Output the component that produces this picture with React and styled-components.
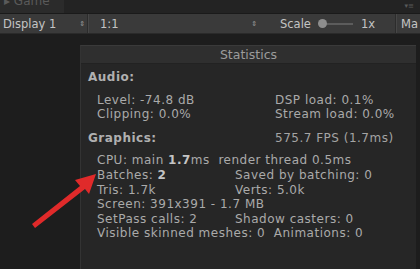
import React from "react";
import styled, { createGlobalStyle } from "styled-components";

const Global = createGlobalStyle`
  html, body {
    margin: 0;
    padding: 0;
    background: #1c1c1c;
  }
  body {
    font-family: "DejaVu Sans", "Liberation Sans", sans-serif;
  }
`;

const Screen = styled.div`
  position: relative;
  width: 420px;
  height: 269px;
  overflow: hidden;
  background: #1c1c1c;
  display: flex;
  flex-direction: column;
`;

const TabStrip = styled.div`
  height: 13px;
  display: flex;
  background: #232323;
  border-bottom: 1px solid #1a1a1a;
`;

const Tab = styled.div`
  width: 60px;
  background: #2b2b2b;
  color: #5a5a5a;
  font-size: 12px;
  line-height: 12px;
  padding-left: 4px;
  overflow: hidden;
  span {
    display: block;
    margin-top: -5px;
  }
`;

const TabMenu = styled.div`
  margin-left: auto;
  padding-right: 6px;
  color: #5a5a5a;
  font-size: 7px;
  line-height: 12px;
`;

const Toolbar = styled.div`
  height: 19px;
  display: flex;
  align-items: center;
  background: #3a3a3a;
  border-bottom: 1px solid #2a2a2a;
  color: #c4c4c4;
  font-size: 11.5px;
  overflow: hidden;
`;

const ToolItem = styled.div`
  flex-shrink: 0;
  display: flex;
  align-items: center;
  height: 100%;
  width: ${(p) => p.$w || "auto"};
  padding: 0 ${(p) => p.$pad || "3px"};
  box-sizing: border-box;
  border-right: ${(p) => (p.$sep ? "1px solid #2c2c2c" : "none")};
  box-shadow: ${(p) => (p.$sep ? "1px 0 0 #474747" : "none")};
`;

const Updown = styled.span`
  margin-left: auto;
  font-size: 7px;
  color: #9a9a9a;
  letter-spacing: -1px;
`;

const Slider = styled.div`
  position: relative;
  width: 34px;
  height: 9px;
  margin: 0 8px 0 8px;
  display: flex;
  align-items: center;
  &::before {
    content: "";
    flex: 1;
    height: 2px;
    background: #5c5c5c;
  }
`;

const Knob = styled.div`
  position: absolute;
  left: -1px;
  width: 9px;
  height: 9px;
  border-radius: 50%;
  background: #8d8d8d;
`;

const Viewport = styled.div`
  flex: 1;
  padding: 11px 4px 0 80px;
  background: #1d1d1d;
`;

const Panel = styled.div`
  height: 100%;
  background: #262626;
  border-left: 1px solid #333;
  border-top: 1px solid #3a3a3a;
  display: flex;
  flex-direction: column;
`;

const PanelHead = styled.div`
  height: 17px;
  background: #2f2f2f;
  border-bottom: 1px solid #222;
  color: #9c9c9c;
  font-size: 12.5px;
  line-height: 17px;
  text-align: center;
`;

const PanelBody = styled.div`
  padding: 6px 0 0 7px;
  color: #aaaaaa;
  font-size: 12px;
  letter-spacing: 0.5px;
  line-height: 14.6px;
`;

const Heading = styled.div`
  font-weight: bold;
  color: #b0b0b0;
  display: grid;
  grid-template-columns: 187px auto;
  margin: ${(p) => p.$m || "0"};
  span {
    font-weight: normal;
    color: #a4a4a4;
  }
`;

const Rows = styled.div`
  padding-left: 9px;
  margin: ${(p) => p.$m || "0"};
`;

const Row = styled.div`
  display: grid;
  grid-template-columns: ${(p) => p.$col || "178px"} auto;
  white-space: pre;
  b {
    color: #c4c4c4;
  }
`;

const Arrow = styled.svg`
  position: absolute;
  left: 0;
  top: 0;
  pointer-events: none;
`;

export default function App() {
  return (
    <>
      <Global />
      <Screen>
        <TabStrip>
          <Tab>
            <span>▸ Game</span>
          </Tab>
          <TabMenu>▾≡</TabMenu>
        </TabStrip>
        <Toolbar>
          <ToolItem $w="88px" $sep>
            Display 1<Updown>⇕</Updown>
          </ToolItem>
          <ToolItem $w="180px" $pad="12px">
            1:1<Updown>⇕</Updown>
          </ToolItem>
          <ToolItem $w="128px" $pad="12px" $sep>
            Scale
            <Slider>
              <Knob />
            </Slider>
            1x
          </ToolItem>
          <ToolItem $pad="5px">Ma</ToolItem>
        </Toolbar>
        <Viewport>
          <Panel>
            <PanelHead>Statistics</PanelHead>
            <PanelBody>
              <Heading>Audio:</Heading>
              <Rows $m="8px 0 9px">
                <Row>
                  <span>Level: -74.8 dB</span>
                  <span>DSP load: 0.1%</span>
                </Row>
                <Row>
                  <span>Clipping: 0.0%</span>
                  <span>Stream load: 0.0%</span>
                </Row>
              </Rows>
              <Heading>
                Graphics:<span>575.7 FPS (1.7ms)</span>
              </Heading>
              <Rows $m="8px 0 0">
                <Row $col="auto">
                  <span>
                    CPU: main <b>1.7</b>ms  render thread 0.5ms
                  </span>
                </Row>
                <Row $col="138px">
                  <span>
                    Batches: <b>2</b>
                  </span>
                  <span>Saved by batching: 0</span>
                </Row>
                <Row $col="138px">
                  <span>Tris: 1.7k</span>
                  <span>Verts: 5.0k</span>
                </Row>
                <Row $col="auto">
                  <span>Screen: 391x391 - 1.7 MB</span>
                </Row>
                <Row $col="138px">
                  <span>SetPass calls: 2</span>
                  <span>Shadow casters: 0</span>
                </Row>
                <Row $col="auto">
                  <span>Visible skinned meshes: 0  Animations: 0</span>
                </Row>
              </Rows>
            </PanelBody>
          </Panel>
        </Viewport>
        <Arrow width="420" height="269" viewBox="0 0 420 269">
          <path
            d="M32 224 L80 186 L75 180 L96 174 L89 194 L85 189 L35 228 Z"
            fill="#e02a2a"
          />
        </Arrow>
      </Screen>
    </>
  );
}
